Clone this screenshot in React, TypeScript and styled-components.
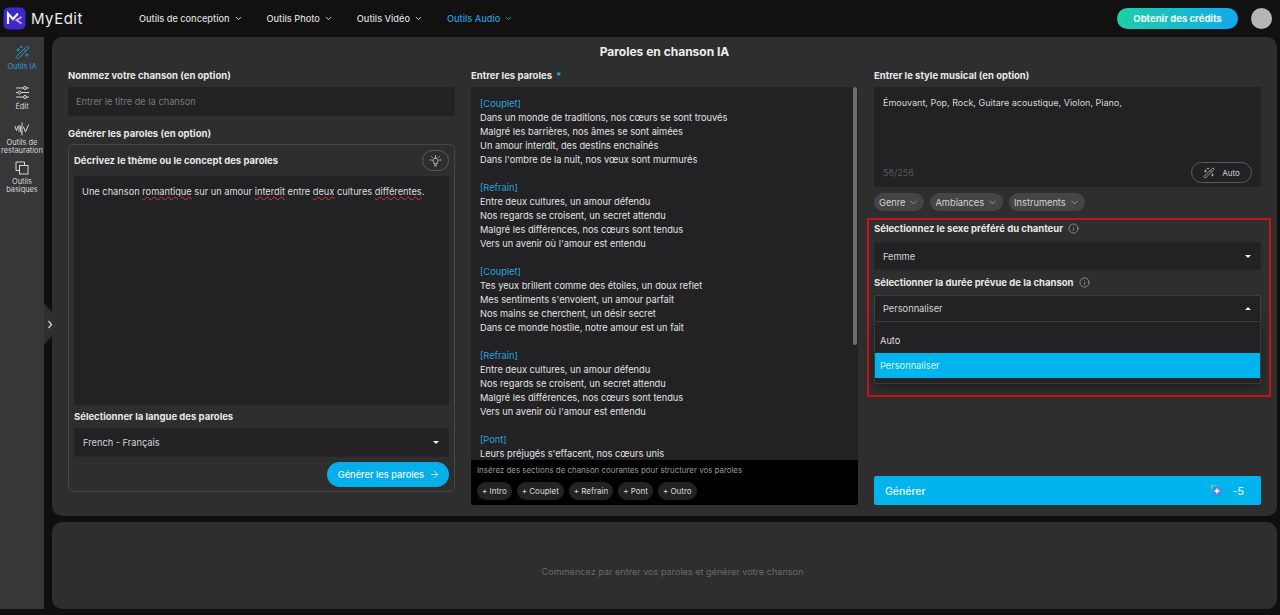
import styled, { createGlobalStyle } from "styled-components"
import { ArrowRight, ChevronDown, Info, WandSparkles } from "lucide-react"

const GlobalStyle = createGlobalStyle`
  html, body {
    margin: 0;
    height: 100%;
    overflow: hidden;
    background: #0f0f10;
  }
  * {
    box-sizing: border-box;
  }
  body {
    font-family: 'Inter', 'Liberation Sans', sans-serif;
    color: #e6e6e6;
  }
`

const Page = styled.div`
  display: grid;
  grid-template-rows: 37px 1fr;
  width: 1280px;
  height: 615px;
  padding-bottom: 6px;
  overflow: hidden;
`

const Header = styled.header`
  display: flex;
  align-items: center;
  padding: 0 8px 1px 3px;
  background: #111112;
`

const Brand = styled.div`
  display: flex;
  align-items: center;
  gap: 5px;
  width: 136px;
  font-size: 15px;
  letter-spacing: 0.5px;
  color: #ececec;
`

const Nav = styled.nav`
  display: flex;
  gap: 24px;
`

const NavItem = styled.div<{ $active?: boolean }>`
  display: flex;
  align-items: center;
  gap: 4px;
  font-size: 9.2px;
  font-weight: 500;
  color: ${(p) => (p.$active ? "#2a9fd6" : "#dcdcdc")};
`

const CreditButton = styled.div`
  display: flex;
  align-items: center;
  justify-content: center;
  width: 121px;
  height: 21px;
  margin-left: auto;
  border-radius: 11px;
  background: linear-gradient(90deg, #1fcfa6, #11a8f0);
  font-size: 9.5px;
  font-weight: 700;
  color: #f2fffb;
`

const Avatar = styled.div`
  width: 21px;
  height: 21px;
  margin-left: 13px;
  border-radius: 50%;
  background: #b5b5b5;
`

const Body = styled.div`
  display: grid;
  grid-template-columns: 44px 1fr;
  min-height: 0;
`

const Sidebar = styled.aside`
  position: relative;
  display: flex;
  flex-direction: column;
  align-items: center;
  padding-top: 8px;
  background: #373737;
`

const SideItem = styled.div<{ $active?: boolean; $h: number }>`
  display: flex;
  flex-direction: column;
  align-items: center;
  height: ${(p) => p.$h}px;
  font-size: 7.4px;
  line-height: 7.5px;
  text-align: center;
  white-space: nowrap;
  color: ${(p) => (p.$active ? "#2a9fd6" : "#d8d8d8")};

  svg {
    flex-shrink: 0;
    margin-bottom: 3px;
  }
`

const SideToggle = styled.div`
  position: absolute;
  top: 266px;
  left: 44px;
  display: flex;
  align-items: center;
  justify-content: center;
  width: 11px;
  height: 42px;
  background: #2f2f2f;
  clip-path: polygon(0 0, 100% 30%, 100% 70%, 0 100%);
  color: #c8c8c8;
`

const Content = styled.main`
  display: grid;
  grid-template-rows: 479px 87px;
  gap: 6px;
  padding: 0 3px 0 8px;
  min-height: 0;
`

const Panel = styled.section`
  display: flex;
  flex-direction: column;
  padding: 0 16px;
  border-radius: 10px;
  background: #2e2e2f;
`

const PanelTitle = styled.h1`
  margin: 0;
  padding-top: 7px;
  height: 31px;
  font-size: 12px;
  line-height: 15px;
  font-weight: 700;
  text-align: center;
  color: #eeeeee;
`

const Columns = styled.div`
  display: grid;
  grid-template-columns: repeat(3, minmax(0, 1fr));
  grid-template-rows: minmax(0, 1fr);
  gap: 16px;
  height: 437px;
`

const Column = styled.div`
  display: flex;
  flex-direction: column;
  min-width: 0;
  min-height: 0;
`

const Label = styled.div<{ $mt?: number; $mb?: number }>`
  display: flex;
  align-items: center;
  gap: 5px;
  flex-shrink: 0;
  margin-top: ${(p) => p.$mt ?? 0}px;
  margin-bottom: ${(p) => p.$mb ?? 5}px;
  height: 14px;
  font-size: 9.5px;
  font-weight: 700;
  color: #e8e8e8;
`

const Star = styled.span`
  margin-left: 2px;
  color: #18a8e0;
`

const TitleInput = styled.div`
  display: flex;
  align-items: center;
  height: 29px;
  padding: 0 8px;
  border-radius: 2px;
  background: #222224;
  font-size: 9.25px;
  color: #77777a;
`

const LyricsIdea = styled.div`
  display: flex;
  flex-direction: column;
  height: 348px;
  padding: 5px 5px 4px;
  border: 1px solid #474748;
  border-radius: 6px;
`

const IdeaHead = styled.div`
  display: flex;
  align-items: center;
  justify-content: space-between;
  height: 21px;
  margin-bottom: 5px;
  font-size: 9.5px;
  font-weight: 700;
  color: #e8e8e8;
`

const BulbButton = styled.div`
  display: flex;
  align-items: center;
  justify-content: center;
  width: 27px;
  height: 21px;
  border: 1px solid #5a5a5b;
  border-radius: 11px;
`

const IdeaArea = styled.div`
  height: 229px;
  padding: 9px 8px;
  border-radius: 2px;
  background: #222224;
  font-size: 9.25px;
  line-height: 14px;
  color: #dedede;
`

const Misspelt = styled.span`
  text-decoration: underline wavy #d8333a 1px;
  text-underline-offset: 1px;
`

const SelectBox = styled.div<{ $h?: number; $open?: boolean }>`
  display: flex;
  align-items: center;
  justify-content: space-between;
  height: ${(p) => p.$h ?? 29}px;
  padding: 0 9px 0 8px;
  border: 1px solid ${(p) => (p.$open ? "#3f3f40" : "#262627")};
  border-radius: 2px;
  background: #222224;
  font-size: 9.25px;
  color: #d4d4d4;
`

const Caret = styled.span<{ $up?: boolean }>`
  width: 0;
  height: 0;
  border-left: 3.5px solid transparent;
  border-right: 3.5px solid transparent;
  border-top: ${(p) => (p.$up ? "none" : "3.5px solid #f2f2f2")};
  border-bottom: ${(p) => (p.$up ? "3.5px solid #f2f2f2" : "none")};
`

const PrimaryRow = styled.div`
  display: flex;
  justify-content: flex-end;
  margin-top: 5px;
`

const PrimaryButton = styled.div`
  display: flex;
  align-items: center;
  gap: 5px;
  height: 25px;
  padding: 0 9px 0 11px;
  border-radius: 13px;
  background: #06aeea;
  font-size: 9.25px;
  font-weight: 500;
  color: #e9fbff;
`

const LyricsBox = styled.div`
  position: relative;
  flex: 1;
  display: flex;
  flex-direction: column;
  min-height: 0;
  border-radius: 3px;
  background: #222224;
  overflow: hidden;
`

const LyricsText = styled.div`
  flex: 1;
  min-height: 0;
  padding: 10px 9px 0;
  overflow: hidden;
  font-size: 9.25px;
  line-height: 14px;
  color: #e2e2e2;
`

const Stanza = styled.div`
  margin-bottom: 14px;
`

const Tag = styled.div`
  color: #2aa3dc;
`

const ScrollThumb = styled.div`
  position: absolute;
  top: 0;
  right: 1px;
  width: 4px;
  height: 258px;
  border-radius: 2px;
  background: #6f6f70;
`

const SectionBar = styled.div`
  flex-shrink: 0;
  height: 45px;
  padding: 5px 6px 0;
  background: #000000;
  font-size: 7.9px;
  color: #9a9a9a;
`

const Pills = styled.div`
  display: flex;
  gap: 5px;
  margin-top: 7px;
`

const Pill = styled.div`
  display: flex;
  align-items: center;
  height: 18px;
  padding: 0 5px;
  border-radius: 9px;
  background: #232324;
  font-size: 8px;
  color: #dcdcdc;
`

const StyleArea = styled.div`
  position: relative;
  flex-shrink: 0;
  height: 100px;
  padding: 9px;
  border-radius: 2px;
  background: #222224;
  font-size: 9px;
  line-height: 14px;
  color: #d8d8d8;
`

const Counter = styled.div`
  position: absolute;
  left: 9px;
  bottom: 7px;
  font-size: 9px;
  color: #58585a;
`

const AutoButton = styled.div`
  position: absolute;
  right: 9px;
  bottom: 4px;
  display: flex;
  align-items: center;
  justify-content: center;
  gap: 7px;
  width: 61px;
  height: 21px;
  border: 1px solid #5a5a5b;
  border-radius: 11px;
  font-size: 8px;
  color: #d8d8d8;
`

const Chips = styled.div`
  display: flex;
  gap: 6px;
  margin-top: 6px;
`

const Chip = styled.div`
  display: flex;
  align-items: center;
  gap: 3px;
  height: 18px;
  padding: 0 5px;
  border-radius: 9px;
  background: #454546;
  font-size: 9.25px;
  color: #d4d4d4;
`

const Highlight = styled.div`
  position: relative;
  flex-shrink: 0;
  height: 179px;
  margin: 7px -10px 0 -7px;
  padding: 1px 8px 0 5px;
  border: 2px solid #c61416;
`

const SelectWrap = styled.div`
  position: relative;
`

const Dropdown = styled.div`
  position: absolute;
  top: 100%;
  left: 0;
  right: 0;
  height: 62px;
  padding-top: 6px;
  border: 1px solid #3a3a3b;
  border-top: none;
  border-radius: 0 0 2px 2px;
  background: #222224;
  box-shadow: 0 4px 10px rgba(0, 0, 0, 0.35);
`

const Option = styled.div<{ $selected?: boolean }>`
  display: flex;
  align-items: center;
  height: 25px;
  padding: 0 5px;
  font-size: 9.25px;
  background: ${(p) => (p.$selected ? "#00b4ee" : "transparent")};
  color: ${(p) => (p.$selected ? "#dff8ff" : "#dedede")};
`

const GenerateButton = styled.div`
  display: flex;
  align-items: center;
  flex-shrink: 0;
  height: 29px;
  margin-top: auto;
  padding: 1px 17px 0 11px;
  border-radius: 2px;
  background: #00b4ee;
  font-size: 10.5px;
  font-weight: 500;
  color: #e6faff;
`

const Cost = styled.div`
  display: flex;
  align-items: center;
  gap: 9px;
  margin-left: auto;
`

const EmptyPanel = styled.section`
  display: flex;
  align-items: center;
  justify-content: center;
  padding: 11px 0 0 16px;
  border-radius: 10px;
  background: #2e2e2f;
  font-size: 9.1px;
  color: #68686a;
`

const stanzas = [
  {
    tag: "[Couplet]",
    lines: [
      "Dans un monde de traditions, nos cœurs se sont trouvés",
      "Malgré les barrières, nos âmes se sont aimées",
      "Un amour interdit, des destins enchaînés",
      "Dans l'ombre de la nuit, nos vœux sont murmurés",
    ],
  },
  {
    tag: "[Refrain]",
    lines: [
      "Entre deux cultures, un amour défendu",
      "Nos regards se croisent, un secret attendu",
      "Malgré les différences, nos cœurs sont tendus",
      "Vers un avenir où l'amour est entendu",
    ],
  },
  {
    tag: "[Couplet]",
    lines: [
      "Tes yeux brillent comme des étoiles, un doux reflet",
      "Mes sentiments s'envolent, un amour parfait",
      "Nos mains se cherchent, un désir secret",
      "Dans ce monde hostile, notre amour est un fait",
    ],
  },
  {
    tag: "[Refrain]",
    lines: [
      "Entre deux cultures, un amour défendu",
      "Nos regards se croisent, un secret attendu",
      "Malgré les différences, nos cœurs sont tendus",
      "Vers un avenir où l'amour est entendu",
    ],
  },
  {
    tag: "[Pont]",
    lines: ["Leurs préjugés s'effacent, nos cœurs unis"],
  },
]

const navItems = ["Outils de conception", "Outils Photo", "Outils Vidéo", "Outils Audio"]
const sections = ["+ Intro", "+ Couplet", "+ Refrain", "+ Pont", "+ Outro"]
const styleChips = ["Genre", "Ambiances", "Instruments"]

const Logo = () => (
  <svg width="23" height="23" viewBox="0 0 23 23">
    <rect x="0.5" y="0.5" width="22" height="22" rx="5" fill="#3a2bc4" />
    <path d="M5 17V6.5l5 5.5 5-5.5" fill="none" stroke="#f4f2ff" strokeWidth="2.2" />
    <path d="M18.5 10l-5 3 5 3.5" fill="none" stroke="#d9a5ff" strokeWidth="1.8" />
  </svg>
)

const SlidersIcon = () => (
  <svg width="15" height="15" viewBox="0 0 15 15" fill="none" stroke="#d8d8d8" strokeWidth="1">
    <path d="M1 3h7.500M11.500 3H14M1 7.500h2M6 7.500h8M1 12h7.500M11.500 12H14" />
    <circle cx="10" cy="3" r="1.500" />
    <circle cx="4.500" cy="7.500" r="1.500" />
    <circle cx="10" cy="12" r="1.500" />
  </svg>
)

const WaveIcon = () => (
  <svg width="16" height="14" viewBox="0 0 16 14" fill="none" stroke="#d8d8d8" strokeWidth="1" strokeLinecap="round">
    <path d="M1 4.500l1.500 4 1.500-4M5 3.500v6M6.500 4.500v4l.8 2" />
    <path d="M8 1v12" />
    <path d="M9.500 5l2 5 3-7" />
  </svg>
)

const LayersIcon = () => (
  <svg width="14" height="14" viewBox="0 0 14 14" fill="none" stroke="#d8d8d8" strokeWidth="1">
    <path d="M4.500 9.500H1V1h8.500v3.500" />
    <rect x="4.500" y="4.500" width="8.500" height="8.500" />
  </svg>
)

const BulbIcon = () => (
  <svg width="13" height="12" viewBox="0 0 13 12" fill="none" stroke="#cfcfcf" strokeWidth="0.9" strokeLinecap="round">
    <path d="M6.500 3a2.600 2.600 0 0 0-1.500 4.700V9h3V7.700A2.600 2.600 0 0 0 6.500 3z" />
    <path d="M5.500 10.800h2M6.500 .6v1M2.600 1.600l.7.7M10.400 1.600l-.7.7M1.200 5h1M10.800 5h1" />
  </svg>
)

const CreditIcon = () => (
  <svg width="14" height="14" viewBox="0 0 14 14">
    <path d="M1 1h7a5.500 5.500 0 1 1-7 5.300z" fill="#47d6b0" />
    <circle cx="7" cy="7" r="5.600" fill="#3b8fe6" />
    <path d="M7 3.500l.9 2.600 2.600.9-2.600.9L7 10.500l-.9-2.600L3.500 7l2.600-.9z" fill="#ffffff" />
  </svg>
)

export default function App() {
  return (
    <>
      <GlobalStyle />
      <Page>
        <Header>
          <Brand>
            <Logo />
            MyEdit
          </Brand>
          <Nav>
            {navItems.map((item, i) => (
              <NavItem key={item} $active={i === 3}>
                {item}
                <ChevronDown size={9} strokeWidth={2.5} />
              </NavItem>
            ))}
          </Nav>
          <CreditButton>Obtenir des crédits</CreditButton>
          <Avatar />
        </Header>
        <Body>
          <Sidebar>
            <SideItem $active $h={40}>
              <WandSparkles size={15} strokeWidth={1.6} />
              Outils IA
            </SideItem>
            <SideItem $h={37}>
              <SlidersIcon />
              Édit
            </SideItem>
            <SideItem $h={39}>
              <WaveIcon />
              Outils de
              <br />
              restauration
            </SideItem>
            <SideItem $h={38}>
              <LayersIcon />
              Outils
              <br />
              basiques
            </SideItem>
            <SideToggle>
              <svg width="6" height="9" viewBox="0 0 6 9" fill="none" stroke="currentColor" strokeWidth="1.4">
                <path d="M1.500 1l3 3.500-3 3.500" />
              </svg>
            </SideToggle>
          </Sidebar>
          <Content>
            <Panel>
              <PanelTitle>Paroles en chanson IA</PanelTitle>
              <Columns>
                <Column>
                  <Label>Nommez votre chanson (en option)</Label>
                  <TitleInput>Entrer le titre de la chanson</TitleInput>
                  <Label $mt={10} $mb={4}>Générer les paroles (en option)</Label>
                  <LyricsIdea>
                    <IdeaHead>
                      Décrivez le thème ou le concept des paroles
                      <BulbButton>
                        <BulbIcon />
                      </BulbButton>
                    </IdeaHead>
                    <IdeaArea>
                      Une chanson <Misspelt>romantique</Misspelt> sur un amour <Misspelt>interdit</Misspelt> entre{" "}
                      <Misspelt>deux</Misspelt> cultures <Misspelt>différentes</Misspelt>.
                    </IdeaArea>
                    <Label $mt={4} $mb={5}>Sélectionner la langue des paroles</Label>
                    <SelectBox>
                      French - Français
                      <Caret />
                    </SelectBox>
                    <PrimaryRow>
                      <PrimaryButton>
                        Générer les paroles
                        <ArrowRight size={11} strokeWidth={1.6} />
                      </PrimaryButton>
                    </PrimaryRow>
                  </LyricsIdea>
                </Column>
                <Column>
                  <Label>
                    <span>
                      Entrer les paroles<Star> *</Star>
                    </span>
                  </Label>
                  <LyricsBox>
                    <LyricsText>
                      {stanzas.map((stanza, i) => (
                        <Stanza key={i}>
                          <Tag>{stanza.tag}</Tag>
                          {stanza.lines.map((line) => (
                            <div key={line}>{line}</div>
                          ))}
                        </Stanza>
                      ))}
                    </LyricsText>
                    <ScrollThumb />
                    <SectionBar>
                      Insérez des sections de chanson courantes pour structurer vos paroles
                      <Pills>
                        {sections.map((item) => (
                          <Pill key={item}>{item}</Pill>
                        ))}
                      </Pills>
                    </SectionBar>
                  </LyricsBox>
                </Column>
                <Column>
                  <Label>Entrer le style musical (en option)</Label>
                  <StyleArea>
                    Émouvant, Pop, Rock, Guitare acoustique, Violon, Piano,
                    <Counter>56/256</Counter>
                    <AutoButton>
                      <WandSparkles size={12} strokeWidth={1.3} />
                      Auto
                    </AutoButton>
                  </StyleArea>
                  <Chips>
                    {styleChips.map((item) => (
                      <Chip key={item}>
                        {item}
                        <ChevronDown size={11} strokeWidth={1.2} />
                      </Chip>
                    ))}
                  </Chips>
                  <Highlight>
                    <Label $mb={7}>
                      Sélectionnez le sexe préféré du chanteur
                      <Info size={11} strokeWidth={1} />
                    </Label>
                    <SelectBox $h={28}>
                      Femme
                      <Caret />
                    </SelectBox>
                    <Label $mt={5} $mb={6}>
                      Sélectionner la durée prévue de la chanson
                      <Info size={11} strokeWidth={1} />
                    </Label>
                    <SelectWrap>
                      <SelectBox $h={27} $open>
                        Personnaliser
                        <Caret $up />
                      </SelectBox>
                      <Dropdown>
                        <Option>Auto</Option>
                        <Option $selected>Personnaliser</Option>
                      </Dropdown>
                    </SelectWrap>
                  </Highlight>
                  <GenerateButton>
                    Générer
                    <Cost>
                      <CreditIcon />
                      -5
                    </Cost>
                  </GenerateButton>
                </Column>
              </Columns>
            </Panel>
            <EmptyPanel>Commencez par entrer vos paroles et générer votre chanson</EmptyPanel>
          </Content>
        </Body>
      </Page>
    </>
  )
}
